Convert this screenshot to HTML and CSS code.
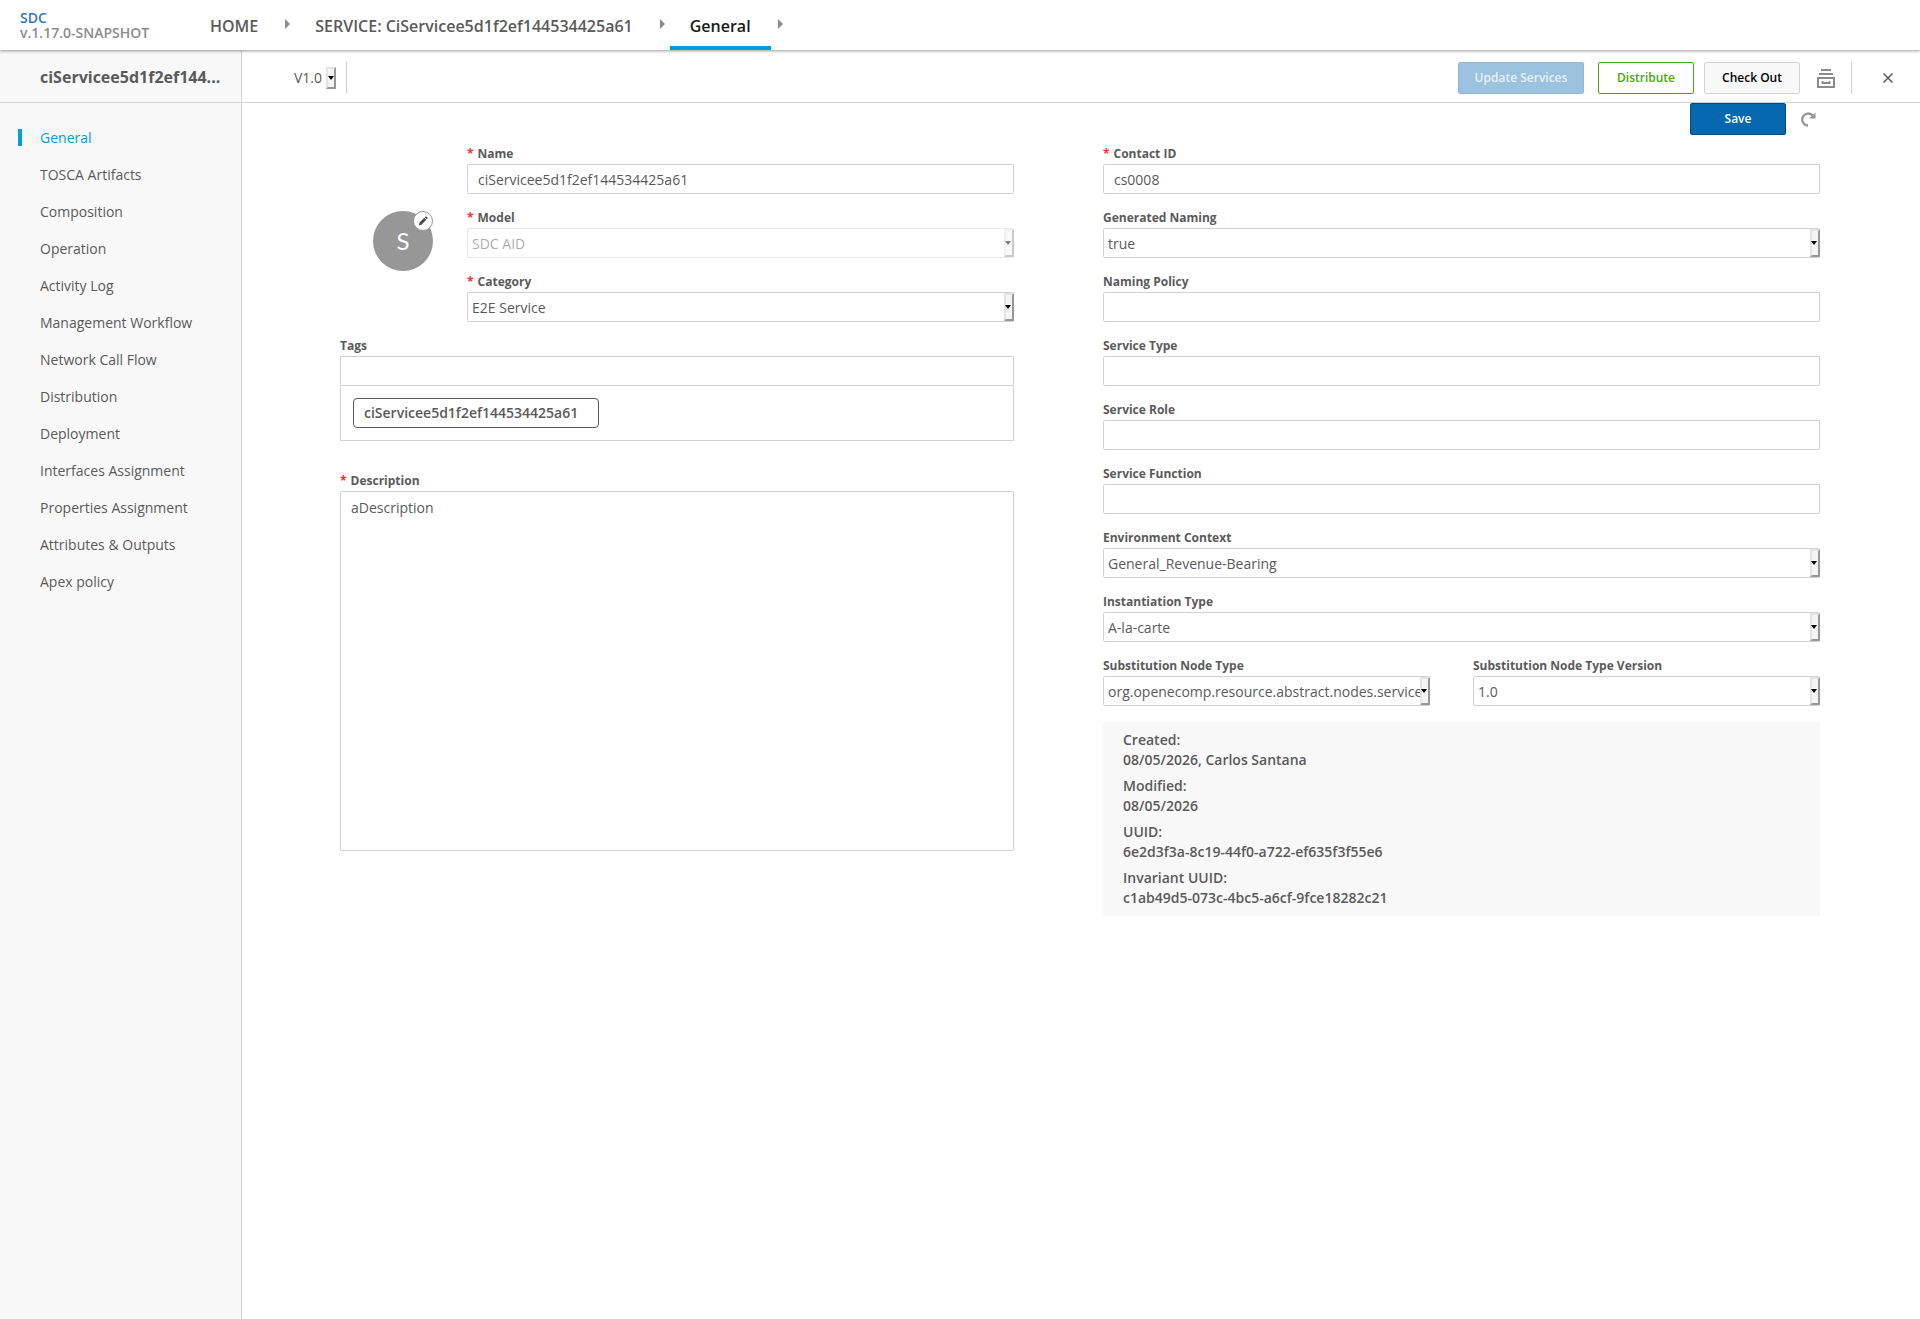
FILE: index.html
```
<!doctype html>
<html lang="en">
<head>
	<meta charset="utf-8">
	<title>SDC - General</title>
	<link rel="stylesheet" href="styles.css">
</head>
<body>
	<header class="top-nav">
		<div class="logo">
			<a href="#">SDC</a>
			<span class="version-text">v.1.17.0-SNAPSHOT</span>
		</div>
		<nav class="breadcrumbs">
			<a href="#">HOME</a>
			<i class="triangle"></i>
			<a href="#">SERVICE: CiServicee5d1f2ef144534425a61</a>
			<i class="triangle"></i>
			<a href="#" class="active">General</a>
			<i class="triangle"></i>
		</nav>
	</header>

	<div class="workspace">
		<aside class="sidebar">
			<h1 class="sidebar-title" title="ciServicee5d1f2ef144534425a61">ciServicee5d1f2ef144...</h1>
			<ul class="menu">
				<li><a href="#" class="selected">General</a></li>
				<li><a href="#">TOSCA Artifacts</a></li>
				<li><a href="#">Composition</a></li>
				<li><a href="#">Operation</a></li>
				<li><a href="#">Activity Log</a></li>
				<li><a href="#">Management Workflow</a></li>
				<li><a href="#">Network Call Flow</a></li>
				<li><a href="#">Distribution</a></li>
				<li><a href="#">Deployment</a></li>
				<li><a href="#">Interfaces Assignment</a></li>
				<li><a href="#">Properties Assignment</a></li>
				<li><a href="#">Attributes &amp; Outputs</a></li>
				<li><a href="#">Apex policy</a></li>
			</ul>
		</aside>

		<main class="main">
			<div class="toolbar">
				<div class="version">
					<div class="select version-select">
						<select aria-label="Version">
							<option>V1.0</option>
						</select>
					</div>
				</div>
				<div class="actions">
					<button type="button" class="btn btn-update" disabled>Update Services</button>
					<button type="button" class="btn btn-distribute">Distribute</button>
					<button type="button" class="btn btn-checkout">Check Out</button>
					<button type="button" class="icon-btn btn-archive" aria-label="Archive">
						<svg width="18" height="19" viewBox="0 0 18 19" fill="none" stroke="#8c8c8c" stroke-width="2">
							<path d="M4 1h10M2 5h14M1 9h16v9H1z"/>
							<path d="M5.500 12v2h7v-2" stroke-width="1.800"/>
						</svg>
					</button>
					<button type="button" class="icon-btn btn-close" aria-label="Close">
						<svg width="10" height="10" viewBox="0 0 10 10" fill="none" stroke="#5a5a5a" stroke-width="1.500">
							<path d="M.5.5l9 9M9.500.5l-9 9"/>
						</svg>
					</button>
				</div>
			</div>

			<form class="general-form">
				<div class="form-actions">
					<button type="button" class="btn btn-save">Save</button>
					<button type="button" class="icon-btn" aria-label="Revert">
						<svg width="15" height="15" viewBox="0 0 15 15" fill="none" stroke="#979797" stroke-width="2.300">
							<path d="M7 13.500A6 6 0 1 1 11.800 3.600"/>
							<path d="M14.500 .5v6H8z" fill="#979797" stroke="none"/>
						</svg>
					</button>
				</div>

				<div class="columns">
					<div class="column">
						<div class="intro">
							<div class="avatar">
								<span>S</span>
								<button type="button" class="avatar-edit" aria-label="Edit icon">
									<svg width="10" height="10" viewBox="0 0 10 10" fill="#4a4a4a">
										<path d="M.8 9.400l.8-2.900L6.300 1.800l2 2L3.600 8.500zM6.900 1.200L8 .2l1.900 1.900-1 1.100z"/>
									</svg>
								</button>
							</div>
							<div class="intro-fields">
								<div class="field">
									<label for="name" class="required">Name</label>
									<input id="name" type="text" value="ciServicee5d1f2ef144534425a61">
								</div>
								<div class="field">
									<label for="model" class="required">Model</label>
									<div class="select disabled">
										<select id="model" disabled><option>SDC AID</option></select>
									</div>
								</div>
								<div class="field">
									<label for="category" class="required">Category</label>
									<div class="select">
										<select id="category"><option>E2E Service</option></select>
									</div>
								</div>
							</div>
						</div>
						<div class="field tags-field">
							<label for="tags">Tags</label>
							<input id="tags" type="text">
							<div class="tags">
								<span class="tag">ciServicee5d1f2ef144534425a61</span>
							</div>
						</div>
						<div class="field">
							<label for="description" class="required">Description</label>
							<textarea id="description">aDescription</textarea>
						</div>
					</div>

					<div class="column">
						<div class="field">
							<label for="contact" class="required">Contact ID</label>
							<input id="contact" type="text" value="cs0008">
						</div>
						<div class="field">
							<label for="generated-naming">Generated Naming</label>
							<div class="select">
								<select id="generated-naming"><option>true</option><option>false</option></select>
							</div>
						</div>
						<div class="field">
							<label for="naming-policy">Naming Policy</label>
							<input id="naming-policy" type="text">
						</div>
						<div class="field">
							<label for="service-type">Service Type</label>
							<input id="service-type" type="text">
						</div>
						<div class="field">
							<label for="service-role">Service Role</label>
							<input id="service-role" type="text">
						</div>
						<div class="field">
							<label for="service-function">Service Function</label>
							<input id="service-function" type="text">
						</div>
						<div class="field">
							<label for="environment">Environment Context</label>
							<div class="select">
								<select id="environment"><option>General_Revenue-Bearing</option></select>
							</div>
						</div>
						<div class="field">
							<label for="instantiation">Instantiation Type</label>
							<div class="select">
								<select id="instantiation"><option>A-la-carte</option></select>
							</div>
						</div>
						<div class="substitution">
							<div class="field">
								<label for="node-type">Substitution Node Type</label>
								<div class="select">
									<select id="node-type"><option>org.openecomp.resource.abstract.nodes.service</option></select>
								</div>
							</div>
							<div class="field">
								<label for="node-version">Substitution Node Type Version</label>
								<div class="select">
									<select id="node-version"><option>1.0</option></select>
								</div>
							</div>
						</div>
						<dl class="meta">
							<dt>Created:</dt>
							<dd>08/05/2026, Carlos Santana</dd>
							<dt>Modified:</dt>
							<dd>08/05/2026</dd>
							<dt>UUID:</dt>
							<dd>6e2d3f3a-8c19-44f0-a722-ef635f3f55e6</dd>
							<dt>Invariant UUID:</dt>
							<dd>c1ab49d5-073c-4bc5-a6cf-9fce18282c21</dd>
						</dl>
					</div>
				</div>
			</form>
		</main>
	</div>
</body>
</html>
```
FILE: styles.css
```
*, *::before, *::after {
	box-sizing: border-box;
}

body {
	margin: 0;
	min-height: 100vh;
	display: flex;
	flex-direction: column;
	font: 14px/20px "Open Sans", sans-serif;
	color: #5a5a5a;
	background: #fff;
}

a {
	color: inherit;
	text-decoration: none;
}

button, input, select, textarea {
	font: inherit;
	color: inherit;
}

button {
	cursor: pointer;
}

/* top navigation */
.top-nav {
	display: flex;
	height: 50px;
	padding-left: 20px;
	box-shadow: 0 1px 3px 0 rgba(0, 0, 0, .4);
	position: relative;
	z-index: 1;
}

.logo {
	display: flex;
	flex-direction: column;
	width: 170px;
	padding-top: 10px;
	font-weight: 600;
	line-height: 15px;
}

.logo a {
	color: #337ab7;
}

.version-text {
	color: #8c8c8c;
}

.breadcrumbs {
	display: flex;
	align-items: center;
	font-size: 16px;
	font-weight: 600;
}

.breadcrumbs a {
	height: 50px;
	padding: 0 20px;
	line-height: 52px;
}

.breadcrumbs .active {
	color: #191919;
	border-bottom: 4px solid #009fdb;
}

.triangle {
	margin: 0 5px 2px 7px;
	border-left: 5px solid #8c8c8c;
	border-top: 5px solid transparent;
	border-bottom: 5px solid transparent;
}

.workspace {
	display: flex;
	flex: 1;
}

/* sidebar */
.sidebar {
	width: 242px;
	flex: none;
	background: #f8f8f8;
	border-right: 1px solid #d2d2d2;
}

.sidebar-title {
	height: 53px;
	margin: 0;
	padding: 0 18px 0 40px;
	border-bottom: 1px solid #d2d2d2;
	font-size: 16px;
	font-weight: 700;
	line-height: 54px;
	white-space: nowrap;
}

.menu {
	list-style: none;
	margin: 0;
	padding: 26px 0 0 18px;
}

.menu li {
	height: 37px;
}

.menu a {
	display: block;
	padding-left: 18px;
	border-left: 4px solid transparent;
	line-height: 17px;
}

.menu .selected {
	color: #009fdb;
	border-color: #009fdb;
}

/* toolbar */
.main {
	flex: 1;
	min-width: 0;
}

.toolbar {
	display: flex;
	align-items: center;
	justify-content: space-between;
	height: 53px;
	padding: 4px 0 0 52px;
	border-bottom: 1px solid #d2d2d2;
}

.version {
	display: flex;
	align-items: center;
	height: 32px;
	padding-right: 10px;
	border-right: 1px solid #d2d2d2;
}

.actions {
	display: flex;
	align-items: center;
	gap: 10px;
}

.btn {
	width: 96px;
	height: 32px;
	padding: 0;
	border: 1px solid;
	border-radius: 2px;
	font-size: 12px;
	font-weight: 600;
}

.btn-update {
	width: 126px;
	margin-right: 4px;
	background: #9bc3df;
	border-color: #8fb9d8;
	color: #e6f1f8;
}

.btn-distribute {
	background: #fff;
	border-color: #4ca90c;
	color: #4ca90c;
}

.btn-checkout {
	background: #f8f8f8;
	border-color: #d2d2d2;
	color: #000;
}

.btn-save {
	background: #0568ae;
	border-color: #034c80;
	color: #fff;
}

.icon-btn {
	display: flex;
	align-items: center;
	justify-content: center;
	padding: 0;
	border: 0;
	background: none;
}

.btn-archive {
	width: 31px;
	height: 32px;
}

.btn-close {
	height: 32px;
	width: 69px;
	padding-left: 4px;
	border-left: 1px solid #d2d2d2;
}

/* selects: a plain box with a raised arrow button on its right side */
.select {
	position: relative;
	border: 1px solid #d2d2d2;
	border-radius: 2px;
}

.select select {
	display: block;
	width: 100%;
	height: 28px;
	padding: 2px 4px 0 4px;
	border: 0;
	background: none;
	appearance: none;
}

.select::before {
	content: "";
	position: absolute;
	top: 0;
	right: -1px;
	bottom: 0;
	width: 10px;
	border: 2px solid;
	border-color: #e3e3e3 #979797 #979797 #e3e3e3;
	background: #f4f4f4;
	pointer-events: none;
}

.select::after {
	content: "";
	position: absolute;
	top: 50%;
	right: 2px;
	margin-top: -2px;
	border: 3px solid transparent;
	border-top: 4px solid #000;
	border-bottom: 0;
	pointer-events: none;
}

.select.disabled {
	opacity: .5;
}

.select select:disabled {
	opacity: 1;
}

.version-select {
	border: 0;
}

.version-select::before {
	right: 0;
}

.version-select select {
	height: 22px;
	width: 42px;
	padding: 0;
}

/* form */
.general-form {
	padding: 0 100px 40px 98px;
}

.form-actions {
	display: flex;
	justify-content: flex-end;
	gap: 15px;
	padding-right: 4px;
}

.columns {
	display: grid;
	grid-template-columns: 47fr 50fr;
	gap: 89px;
	padding-top: 11px;
}

.column {
	min-width: 0;
}

.intro {
	display: flex;
	gap: 34px;
	padding-left: 33px;
}

.intro-fields {
	flex: 1;
}

.avatar {
	position: relative;
	width: 60px;
	height: 60px;
	margin-top: 65px;
	border-radius: 50%;
	background: #979797;
	color: #fff;
	font-family: Lato, sans-serif;
	font-size: 24px;
	line-height: 60px;
	text-align: center;
}

.avatar-edit {
	position: absolute;
	top: 0;
	right: 0;
	display: flex;
	align-items: center;
	justify-content: center;
	width: 20px;
	height: 20px;
	padding: 0;
	border: 1px solid #979797;
	border-radius: 50%;
	background: #fff;
}

.field {
	margin-bottom: 16px;
}

.field label {
	display: block;
	height: 18px;
	font-size: 12px;
	font-weight: 700;
	line-height: 16px;
}

.required::before {
	content: "*";
	margin-right: 4px;
	color: #ff2d2d;
}

.field input, .field textarea {
	display: block;
	width: 100%;
	height: 30px;
	padding: 0 10px;
	border: 1px solid #d2d2d2;
	border-radius: 2px;
	background: #fff;
}

.field textarea {
	height: 360px;
	padding-top: 6px;
	resize: none;
}

.tags-field {
	margin-bottom: 32px;
}

.tags {
	padding: 12px;
	border: 1px solid #d2d2d2;
	border-top: 0;
}

.tag {
	display: block;
	width: 246px;
	height: 30px;
	padding-left: 10px;
	border: 1px solid #5a5a5a;
	border-radius: 4px;
	font-weight: 600;
	line-height: 28px;
}

.substitution {
	display: grid;
	grid-template-columns: 327fr 347fr;
	gap: 43px;
}

.substitution .field {
	min-width: 0;
}

.meta {
	margin: 0;
	padding: 8px 20px 2px;
	background: #f8f8f8;
	font-weight: 600;
}

.meta dd {
	margin: 0 0 6px;
}
```
